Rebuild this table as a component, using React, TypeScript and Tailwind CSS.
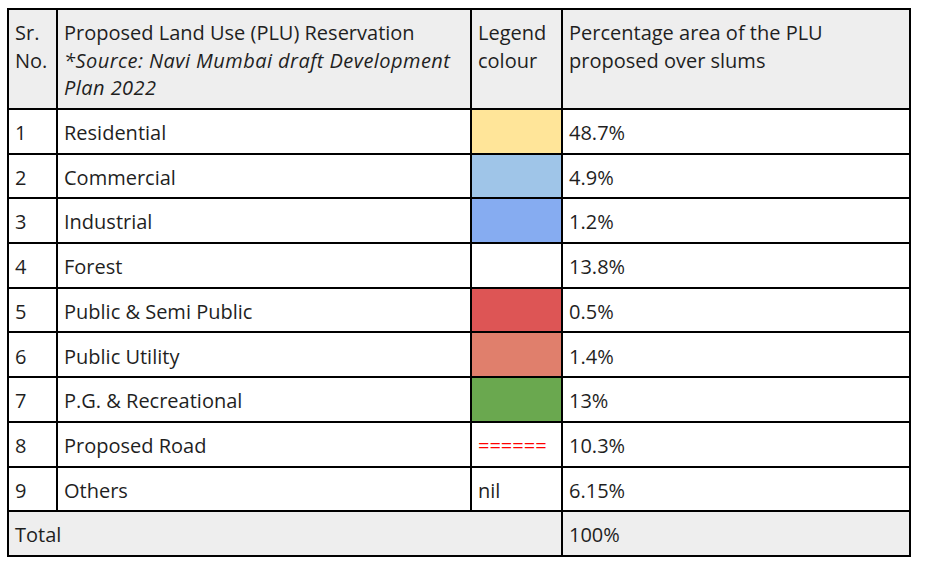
const rows = [
  { no: "1", name: "Residential", legend: "bg-[#ffe599]", pct: "48.7%" },
  { no: "2", name: "Commercial", legend: "bg-[#9fc5e8]", pct: "4.9%" },
  { no: "3", name: "Industrial", legend: "bg-[#86acf1]", pct: "1.2%" },
  { no: "4", name: "Forest", legend: "bg-white", pct: "13.8%" },
  { no: "5", name: "Public & Semi Public", legend: "bg-[#dd5555]", pct: "0.5%" },
  { no: "6", name: "Public Utility", legend: "bg-[#e07f6c]", pct: "1.4%" },
  { no: "7", name: "P.G. & Recreational", legend: "bg-[#6aa84f]", pct: "13%" },
  { no: "8", name: "Proposed Road", legend: "road", pct: "10.3%" },
  { no: "9", name: "Others", legend: "nil", pct: "6.15%" },
]

export default function App() {
  return (
    <div className="bg-white min-h-[564px] pt-[8px] pl-[7px] font-['Open_Sans',sans-serif] text-[20px] leading-[27.5px] text-[#1f1f1f]">
      <table className="table-fixed border-collapse w-[902px]">
        <colgroup>
          <col className="w-[49px]" />
          <col className="w-[414px]" />
          <col className="w-[91px]" />
          <col className="w-[348px]" />
        </colgroup>
        <thead>
          <tr className="h-[100px] bg-[#eeeeee]">
            <th className="border-2 border-black align-top text-left font-normal px-[6px] pt-[9px]">Sr. No.</th>
            <th className="border-2 border-black align-top text-left font-normal px-[6px] pt-[9px]">
              Proposed Land Use (PLU) Reservation
              <br />
              <i className="tracking-[0.45px]">*Source: Navi Mumbai draft Development Plan 2022</i>
            </th>
            <th className="border-2 border-black align-top text-left font-normal px-[6px] pt-[9px]">Legend colour</th>
            <th className="border-2 border-black align-top text-left font-normal px-[6px] pt-[9px]">
              Percentage area of the PLU proposed over slums
            </th>
          </tr>
        </thead>
        <tbody>
          {rows.map((r) => (
            <tr key={r.no} className="h-[44.7px]">
              <td className="border-2 border-black px-[6px] pt-[3px] align-middle">{r.no}</td>
              <td className="border-2 border-black px-[6px] pt-[3px] align-middle">{r.name}</td>
              {r.legend === "road" ? (
                <td className="border-2 border-black px-[6px] pt-[3px] align-middle text-[#ff0000]">======</td>
              ) : r.legend === "nil" ? (
                <td className="border-2 border-black px-[6px] pt-[3px] align-middle">nil</td>
              ) : (
                <td className={`border-2 border-black ${r.legend}`}></td>
              )}
              <td className="border-2 border-black px-[6px] pt-[3px] align-middle">{r.pct}</td>
            </tr>
          ))}
          <tr className="h-[44.7px] bg-[#eeeeee]">
            <td colSpan={3} className="border-2 border-black px-[6px] pt-[3px] align-middle">Total</td>
            <td className="border-2 border-black px-[6px] pt-[3px] align-middle">100%</td>
          </tr>
        </tbody>
      </table>
    </div>
  )
}
